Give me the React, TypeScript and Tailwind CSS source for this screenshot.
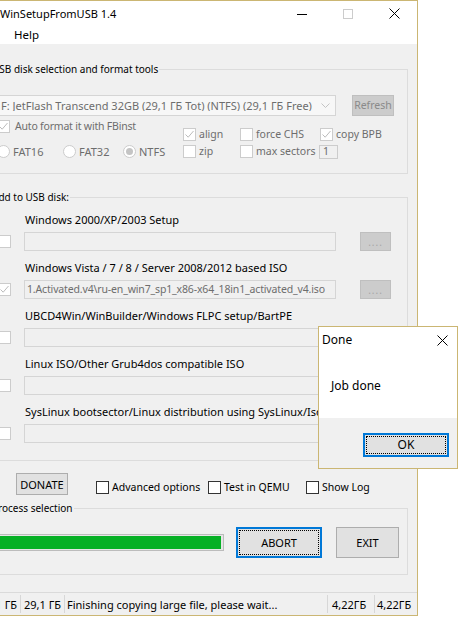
import type { ReactNode } from 'react'
import clsx from 'clsx'

function Check({ checked, disabled }: { checked?: boolean; disabled?: boolean }) {
  return (
    <span className={clsx('w-[13px] h-[13px] shrink-0 border bg-white flex items-center justify-center',
      disabled ? 'border-[#cccccc]' : 'border-[#333333]')}>
      {checked && (
        <svg width="11" height="11" viewBox="0 0 11 11">
          <path d="M1.5 5.5 L4.2 8.2 L9.5 2" fill="none" stroke={disabled ? '#bcbcbc' : '#222'} strokeWidth="1" />
        </svg>
      )}
    </span>
  )
}

function Radio({ checked }: { checked?: boolean }) {
  return (
    <span className="w-[13px] h-[13px] shrink-0 rounded-full border border-[#cccccc] bg-white flex items-center justify-center">
      {checked && <span className="w-[7px] h-[7px] rounded-full bg-[#c4c4c4]" />}
    </span>
  )
}

function CheckItem({ label, checked, disabled, className }: { label: string; checked?: boolean; disabled?: boolean; className?: string }) {
  return (
    <div className={clsx('flex items-center gap-[3px] h-[17px]', className)}>
      <Check checked={checked} disabled={disabled} />
      <span className={disabled ? 'text-[#6d6d6d]' : 'text-black'}>{label}</span>
    </div>
  )
}

function Legend({ children }: { children: ReactNode }) {
  return <div className="-mt-[8px] ml-[6px] w-fit px-[1px] bg-[#f0f0f0] leading-[15px] text-[10px]">{children}</div>
}

function DotsButton() {
  return (
    <div className="ml-[24px] w-[31px] h-[19px] bg-[#cccccc] border border-[#bfbfbf] flex items-center justify-center text-[#a6a6a6] text-[10px] tracking-[1px]">
      ....
    </div>
  )
}

const SOURCES = [
  { label: 'Windows 2000/XP/2003 Setup', value: '' },
  { label: 'Windows Vista / 7 / 8 / Server 2008/2012 based ISO', value: '1.Activated.v4\\ru-en_win7_sp1_x86-x64_18in1_activated_v4.iso', checked: true },
  { label: 'UBCD4Win/WinBuilder/Windows FLPC setup/BartPE', value: '' },
  { label: 'Linux ISO/Other Grub4dos compatible ISO', value: '' },
  { label: 'SysLinux bootsector/Linux distribution using SysLinux/IsoLinux', value: '' },
]

function SourceRow({ label, value, checked, first }: { label: string; value: string; checked?: boolean; first?: boolean }) {
  return (
    <div className={clsx('flex flex-col', first ? 'mt-[6px]' : 'mt-[8px]')}>
      <div className="h-[16px] flex items-center ml-[40px] whitespace-nowrap">{label}</div>
      <div className="mt-[5px] h-[19px] flex items-center">
        <div className="ml-[13px]"><Check checked={checked} disabled /></div>
        <div className="ml-[13px] w-[312px] h-[19px] border border-[#d5d5d5] bg-[#f0f0f0] flex items-center px-[2px] text-[#6d6d6d] text-[10.5px] tracking-[-0.15px] whitespace-nowrap overflow-hidden">
          {value}
        </div>
        <DotsButton />
      </div>
    </div>
  )
}

function StatusSep() {
  return <span className="w-px h-[18px] bg-[#d7d7d7] shrink-0" />
}

export default function App() {
  return (
    <div className="relative w-[458px] h-[617px] overflow-hidden bg-white font-['Noto_Sans','Liberation_Sans',sans-serif] text-[11px] text-black leading-none">
      <div className="-ml-[28px] w-[446px] border-t border-r border-b border-[#cbb673] bg-[#f0f0f0]">
        {/* caption */}
        <div className="h-[25px] bg-white flex items-center">
          <span className="ml-[28px] text-[11px]">WinSetupFromUSB 1.4</span>
          <div className="ml-auto flex h-full">
            <div className="w-[46px] h-full flex items-center justify-center">
              <svg width="10" height="10" viewBox="0 0 10 10"><path d="M0 5.5 H10" stroke="#000" strokeWidth="1" /></svg>
            </div>
            <div className="w-[46px] h-full flex items-center justify-center">
              <svg width="10" height="10" viewBox="0 0 10 10"><rect x="0.5" y="0.5" width="9" height="9" fill="none" stroke="#cccccc" strokeWidth="1" /></svg>
            </div>
            <div className="w-[46px] h-full flex items-center justify-center">
              <svg width="11" height="11" viewBox="0 0 11 11"><path d="M0.5 0.5 L10.5 10.5 M10.5 0.5 L0.5 10.5" stroke="#000" strokeWidth="1" /></svg>
            </div>
          </div>
        </div>
        <div className="h-[18px] bg-white flex items-center">
          <span className="ml-[42px] text-[11.5px]">Help</span>
        </div>

        {/* USB disk selection */}
        <div className="mt-[25px] ml-[12px] w-[424px] h-[105px] border border-[#dcdcdc]">
          <Legend>USB disk selection and format tools</Legend>
          <div className="mt-[18px] flex items-center">
            <div className="ml-[11px] w-[340px] h-[21px] border border-[#d5d5d5] bg-[#f7f7f7] flex items-center">
              <span className="pl-[4px] flex-1 text-[#6d6d6d] whitespace-nowrap overflow-hidden">F: JetFlash Transcend 32GB (29,1 ГБ Tot) (NTFS) (29,1 ГБ Free)</span>
              <span className="w-[19px] h-full flex items-center justify-center">
                <svg width="9" height="6" viewBox="0 0 9 6"><path d="M0.5 0.5 L4.5 4.5 L8.5 0.5" fill="none" stroke="#c4c4c4" strokeWidth="1" /></svg>
              </span>
            </div>
            <div className="ml-[16px] w-[42px] h-[21px] bg-[#cccccc] border border-[#bfbfbf] flex items-center justify-center text-[#8a8a8a] text-[10.5px]">Refresh</div>
          </div>
          <div className="mt-[2px] flex items-end text-[#6d6d6d] text-[10.5px]">
            <div className="ml-[12px] w-[186px] flex flex-col">
              <CheckItem label="Auto format it with FBinst" checked disabled className="gap-[5px] tracking-[-0.2px]" />
              <div className="h-[8px]" />
              <div className="h-[17px] flex items-center text-[11px]">
                <div className="w-[66px] flex items-center gap-[3px]"><Radio /><span>FAT16</span></div>
                <div className="w-[60px] flex items-center gap-[3px]"><Radio /><span>FAT32</span></div>
                <div className="flex items-center gap-[3px]"><Radio checked /><span>NTFS</span></div>
              </div>
            </div>
            <div className="w-[57px] flex flex-col">
              <CheckItem label="align" checked disabled />
              <CheckItem label="zip" disabled />
            </div>
            <div className="w-[80px] flex flex-col">
              <CheckItem label="force CHS" disabled />
              <CheckItem label="max sectors" disabled />
            </div>
            <div className="flex flex-col">
              <CheckItem label="copy BPB" checked disabled />
              <div className="h-[17px] flex items-center">
                <div className="-ml-[1px] w-[19px] h-[14px] border border-[#cccccc] bg-[#f0f0f0] flex items-center pl-[3px]">1</div>
              </div>
            </div>
          </div>
        </div>

        {/* sources */}
        <div className="mt-[23px] ml-[12px] w-[424px] h-[264px] border border-[#dcdcdc]">
          <Legend>Add to USB disk:</Legend>
          {SOURCES.map((s, i) => (
            <SourceRow key={i} label={s.label} value={s.value} checked={s.checked} first={i === 0} />
          ))}
        </div>

        {/* options row */}
        <div className="mt-[12px] h-[22px] flex items-start text-[10.5px]">
          <div className="ml-[44px] w-[52px] h-[22px] bg-[#e1e1e1] border border-[#adadad] flex items-center justify-center text-[11px]">DONATE</div>
          <CheckItem label="Advanced options" className="ml-[28px] w-[112px] mt-[6px]" />
          <CheckItem label="Test in QEMU" className="w-[98px] mt-[6px]" />
          <CheckItem label="Show Log" className="mt-[6px]" />
        </div>

        {/* process */}
        <div className="mt-[13px] ml-[12px] w-[424px] h-[67px] border border-[#dcdcdc]">
          <Legend>Process selection</Legend>
          <div className="mt-[11px] h-[31px] flex items-center">
            <div className="ml-[11px] w-[228px] h-[17px] border border-[#bcbcbc] bg-[#e6e6e6] p-px pr-[2px]">
              <div className="h-full w-full bg-[#06b025]" />
            </div>
            <div className="ml-[12px] w-[86px] h-[31px] bg-[#e1e1e1] border-2 border-[#0078d7] flex p-px">
              <div className="flex-1 border border-dotted border-black flex items-center justify-center">ABORT</div>
            </div>
            <div className="ml-[14px] w-[63px] h-[31px] bg-[#e1e1e1] border border-[#adadad] flex items-center justify-center">EXIT</div>
          </div>
        </div>

        {/* status bar */}
        <div className="mt-[17px] h-[23px] border-t border-[#dadada] flex items-center whitespace-nowrap">
          <span className="w-[48px] text-right pr-[3px]">29,1 ГБ</span>
          <StatusSep />
          <span className="w-[43px] pl-[3px]">29,1 ГБ</span>
          <StatusSep />
          <span className="w-[262px] pl-[2px]">Finishing copying large file, please wait...</span>
          <StatusSep />
          <span className="w-[46px] pl-[4px]">4,22ГБ</span>
          <StatusSep />
          <span className="pl-[2px]">4,22ГБ</span>
        </div>
      </div>

      {/* message box */}
      <div className="absolute left-[318px] top-[326px] w-[140px] h-[143px] border border-[#cbb673] bg-white flex flex-col">
        <div className="h-[26px] flex items-center justify-between">
          <span className="ml-[3px] text-[12px]">Done</span>
          <svg className="mr-[9px]" width="11" height="11" viewBox="0 0 11 11"><path d="M0.5 0.5 L10.5 10.5 M10.5 0.5 L0.5 10.5" stroke="#000" strokeWidth="1" /></svg>
        </div>
        <div className="h-[65px] flex items-center">
          <span className="ml-[12px] text-[12px]">Job done</span>
        </div>
        <div className="flex-1 bg-[#f0f0f0] flex justify-end items-start pt-[15px] pr-[8px]">
          <div className="w-[86px] h-[24px] bg-[#e1e1e1] border-2 border-[#0078d7] flex p-px">
            <div className="flex-1 border border-dotted border-black flex items-center justify-center text-[12px]">OK</div>
          </div>
        </div>
      </div>
    </div>
  )
}
